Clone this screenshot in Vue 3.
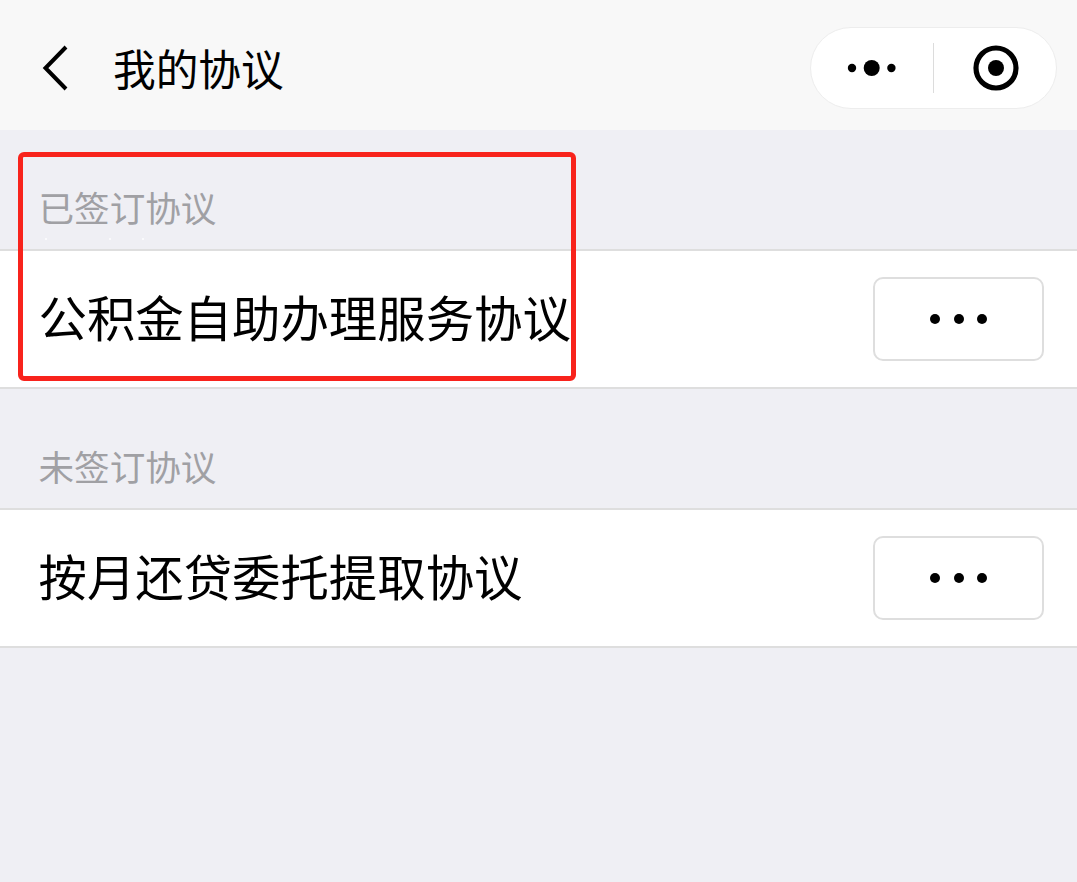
<script setup>
const sections = [
  { title: '已签订协议', item: '公积金自助办理服务协议', first: true },
  { title: '未签订协议', item: '按月还贷委托提取协议', first: false }
]
</script>

<template>
  <div class="page">
    <header class="nav">
      <svg class="back" width="28" height="46" viewBox="0 0 28 46">
        <path d="M24 2 L3.5 23 L24 44" fill="none" stroke="#000" stroke-width="4" />
      </svg>
      <span class="nav-title">我的协议</span>
      <div class="capsule">
        <svg class="more" width="50" height="18" viewBox="0 0 50 18">
          <circle cx="5" cy="9" r="4.2" fill="#000" />
          <circle cx="24.7" cy="9" r="8" fill="#000" />
          <circle cx="44.4" cy="9" r="4.2" fill="#000" />
        </svg>
        <span class="divider"></span>
        <svg class="target" width="46" height="46" viewBox="0 0 46 46">
          <circle cx="23" cy="23" r="20" fill="none" stroke="#000" stroke-width="5.2" />
          <circle cx="23" cy="23" r="8" fill="#000" />
        </svg>
      </div>
    </header>

    <section v-for="s in sections" :key="s.title" class="section">
      <div class="section-title">
        {{ s.title }}
        <template v-if="s.first">
          <i class="speck speck-a"></i><i class="speck speck-b"></i><i class="speck speck-c"></i>
        </template>
      </div>
      <div class="row">
        <span class="row-text">{{ s.item }}</span>
        <button class="dots-btn" type="button" aria-label="更多">
          <i class="dot"></i><i class="dot"></i><i class="dot"></i>
        </button>
      </div>
    </section>

    <div class="highlight"></div>
  </div>
</template>

<style>
html, body { margin: 0; background: #efeff4; }
</style>

<style scoped>
.page {
  position: relative;
  width: 1077px;
  height: 882px;
  overflow: hidden;
  background: #efeff4;
  font-family: "Noto Sans CJK SC", "Noto Sans", sans-serif;
}
.nav {
  display: flex;
  align-items: center;
  box-sizing: border-box;
  height: 130px;
  padding: 7px 20px 0 42px;
  background: #f8f8f8;
}
.back { flex: none; margin-top: -2px; }
.nav-title {
  margin-left: 43px;
  font-size: 42.7px;
  line-height: 1;
  color: #000;
  margin-top: -2px;
}
.capsule {
  display: flex;
  align-items: center;
  box-sizing: border-box;
  width: 247px;
  height: 82px;
  margin-left: auto;
  margin-top: -1px;
  padding-left: 36px;
  background: #fff;
  border: 1.5px solid #ededed;
  border-radius: 41px;
}
.more { flex: none; }
.divider {
  width: 1px;
  height: 50px;
  margin-left: 36px;
  background: #dcdcdc;
}
.target { flex: none; margin-left: 39px; }
.section-title {
  position: relative;
  box-sizing: border-box;
  height: 119px;
  padding: 52px 0 0 38.5px;
  font-size: 35.6px;
  line-height: 50px;
  color: #a0a0a4;
}
.speck {
  position: absolute;
  top: 108px;
  width: 2px;
  height: 2px;
  background: #fafafc;
}
.speck-a { left: 45px; }
.speck-b { left: 109px; }
.speck-c { left: 142px; }
.row {
  display: flex;
  align-items: center;
  justify-content: space-between;
  box-sizing: border-box;
  height: 140px;
  padding: 0 33px 0 38.5px;
  background: #fff;
  border-top: 2px solid #dedede;
  border-bottom: 2px solid #dedede;
}
.row-text {
  padding-bottom: 5px;
  font-size: 48.4px;
  line-height: 1;
  color: #000;
}
.dots-btn {
  display: flex;
  align-items: center;
  justify-content: center;
  gap: 13.5px;
  box-sizing: border-box;
  width: 171px;
  height: 84px;
  padding: 0;
  background: #fff;
  border: 2px solid #dedede;
  border-radius: 10px;
}
.dot {
  display: block;
  width: 10px;
  height: 10px;
  border-radius: 50%;
  background: #000;
}
.highlight {
  position: absolute;
  left: 18px;
  top: 152px;
  box-sizing: border-box;
  width: 558px;
  height: 229px;
  border: 5px solid #f8231c;
  border-radius: 6px;
  pointer-events: none;
}
</style>
